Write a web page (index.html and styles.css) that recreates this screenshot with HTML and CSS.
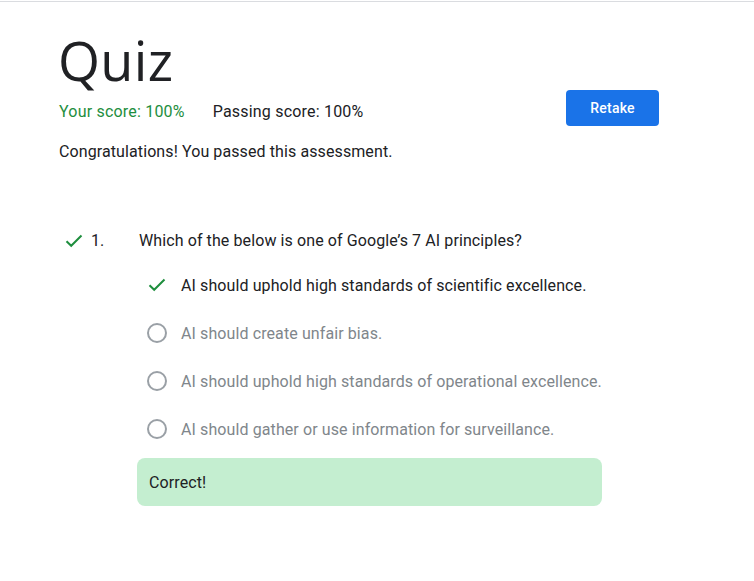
FILE: index.html
```html
<!DOCTYPE html>
<html>
<head>
<meta charset="utf-8">
<link rel="stylesheet" href="styles.css">
</head>
<body>
<div class="topline"></div>
<main class="page">
  <h1 class="title">Quiz</h1>
  <div class="score-row">
    <div class="scores">
      <span class="your-score">Your score: 100%</span>
      <span class="passing">Passing score: 100%</span>
    </div>
    <button class="retake">Retake</button>
  </div>
  <p class="congrats">Congratulations! You passed this assessment.</p>

  <section class="question">
    <div class="q-head">
      <span class="q-icon">
        <svg width="18" height="14" viewBox="0 0 18 14"><path d="M1.5 7.2 L6.2 11.8 L16.5 1.5" fill="none" stroke="#1e8e3e" stroke-width="2"/></svg>
      </span>
      <span class="q-num">1.</span>
      <span class="q-text">Which of the below is one of Google’s 7 AI principles?</span>
    </div>
    <ul class="options">
      <li class="option selected">
        <span class="opt-icon">
          <svg width="18" height="14" viewBox="0 0 18 14"><path d="M1.5 7.2 L6.2 11.8 L16.5 1.5" fill="none" stroke="#1e8e3e" stroke-width="2"/></svg>
        </span>
        <span class="opt-text">AI should uphold high standards of scientific excellence.</span>
      </li>
      <li class="option">
        <span class="opt-icon"><span class="radio"></span></span>
        <span class="opt-text">AI should create unfair bias.</span>
      </li>
      <li class="option">
        <span class="opt-icon"><span class="radio"></span></span>
        <span class="opt-text">AI should uphold high standards of operational excellence.</span>
      </li>
      <li class="option">
        <span class="opt-icon"><span class="radio"></span></span>
        <span class="opt-text">AI should gather or use information for surveillance.</span>
      </li>
    </ul>
    <div class="feedback">Correct!</div>
  </section>
</main>
</body>
</html>
```
FILE: styles.css
```css
html, body {
  margin: 0;
  padding: 0;
  background: #fff;
}
body {
  font-family: Roboto, "Liberation Sans", sans-serif;
  color: #202124;
  letter-spacing: 0.1px;
}
.topline {
  height: 1px;
  margin-top: 1px;
  background: #dadce0;
}
.page {
  padding: 0 0 0 59px;
  width: 600px;
}
.title {
  font-family: "Open Sans", Roboto, sans-serif;
  font-weight: 500;
  font-size: 54px;
  line-height: 64px;
  margin: 26px 0 0 -1px;
  color: #202124;
  letter-spacing: 0.3px;
}
.score-row {
  display: flex;
  justify-content: space-between;
  align-items: center;
  margin-top: -2px;
  height: 36px;
}
.scores {
  display: flex;
  gap: 28px;
  font-size: 16px;
  line-height: 24px;
  padding-top: 8px;
  letter-spacing: 0.2px;
}
.your-score { color: #1e8e3e; }
.passing { color: #202124; }
.retake {
  width: 93px;
  height: 36px;
  border: none;
  border-radius: 4px;
  background: #1a73e8;
  color: #fff;
  font-family: Roboto, sans-serif;
  font-weight: 500;
  font-size: 14px;
  letter-spacing: 0.25px;
  padding: 0;
}
.congrats {
  margin: 14px 0 0;
  font-size: 16px;
  line-height: 24px;
}
.question {
  margin-top: 65px;
}
.q-head {
  display: flex;
  align-items: center;
  font-size: 16px;
  line-height: 24px;
}
.q-icon {
  display: flex;
  width: 32px;
  padding-left: 6px;
  box-sizing: border-box;
}
.q-num {
  width: 48px;
  color: #202124;
}
.options {
  list-style: none;
  margin: 8px 0 0;
  padding: 0 0 0 88px;
}
.option {
  display: flex;
  align-items: center;
  height: 48px;
  font-size: 16px;
}
.opt-icon {
  width: 34px;
  display: flex;
  align-items: center;
}
.option.selected .opt-icon { padding-left: 1px; box-sizing: border-box; }
.radio {
  width: 16px;
  height: 16px;
  border: 2px solid #9aa0a6;
  border-radius: 50%;
}
.opt-text { color: #80868b; }
.option.selected .opt-text { color: #202124; }
.feedback {
  margin: 5px 0 0 78px;
  width: 465px;
  height: 48px;
  box-sizing: border-box;
  padding: 0 12px;
  display: flex;
  align-items: center;
  background: #c4eed0;
  border-radius: 8px;
  font-size: 16px;
}
```
